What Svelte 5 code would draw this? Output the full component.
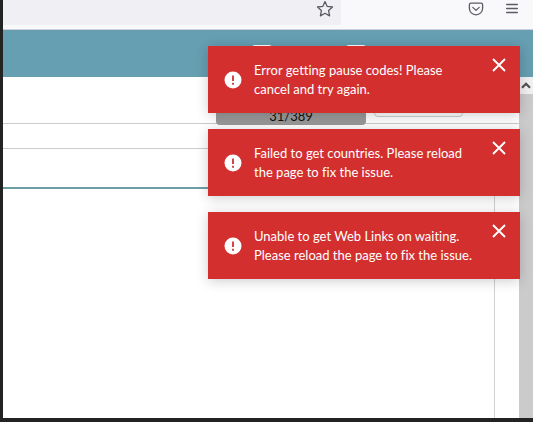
<script>
  let toasts = $state([
    { id: 1, text: 'Error getting pause codes! Please cancel and try again.' },
    { id: 2, text: 'Failed to get countries. Please reload the page to fix the issue.' },
    { id: 3, text: 'Unable to get Web Links on waiting. Please reload the page to fix the issue.' }
  ]);

  function dismiss(id) {
    toasts = toasts.filter((toast) => toast.id !== id);
  }
</script>

<div class="window">
  <div class="browser-bar">
    <div class="address">
      <button class="icon-button" aria-label="Bookmark this page">
        <svg width="18" height="18" viewBox="0 0 18 18" fill="none" stroke="#5b5b66" stroke-width="1.3" stroke-linejoin="round">
          <path d="M9 1.6 11.2 6.4 16.5 7 12.6 10.6 13.6 15.9 9 13.3 4.4 15.9 5.4 10.6 1.5 7 6.8 6.4Z" />
        </svg>
      </button>
    </div>
    <div class="tools">
      <button class="icon-button" aria-label="Save to Pocket">
        <svg width="16" height="16" viewBox="0 0 16 16" fill="none" stroke="#5b5b66" stroke-width="1.3" stroke-linecap="round" stroke-linejoin="round">
          <path d="M3 2.2h10a1.6 1.6 0 0 1 1.6 1.6V7.2a6.6 6.6 0 0 1-13.2 0V3.8A1.6 1.6 0 0 1 3 2.2Z" />
          <path d="M4.8 6.4 8 9.4l3.2-3" />
        </svg>
      </button>
      <button class="icon-button" aria-label="Open application menu">
        <svg width="12" height="12" viewBox="0 0 12 12" stroke="#5b5b66" stroke-width="1.3" stroke-linecap="round">
          <path d="M.6 1.5h10.8M.6 5.5h10.8M.6 9.5h10.8" />
        </svg>
      </button>
    </div>
  </div>

  <div class="viewport">
    <header class="app-header">
      <span class="chip"></span>
      <span class="chip"></span>
    </header>

    <div class="page">
      <main>
        <div class="controls">
          <div class="counter">31/389</div>
          <input class="field" type="text" aria-label="Search" />
        </div>
        <section class="panel">
          <div class="panel-head"></div>
        </section>
      </main>
      <div class="scrollbar">
        <button class="scroll-up" aria-label="Scroll up">
          <svg width="10" height="7" viewBox="0 0 10 7" fill="none" stroke="#505050" stroke-width="2.2">
            <path d="M1 5.7 5 1.7 9 5.7" />
          </svg>
        </button>
      </div>
    </div>

    <div class="toasts">
      {#each toasts as toast (toast.id)}
        <div class="toast" role="alert">
          <svg class="alert-icon" width="18" height="18" viewBox="0 0 18 18">
            <circle cx="9" cy="9" r="8.5" fill="#fff" />
            <path d="M9 4.5v5.5M9 11.7v2" stroke="#d32f2f" stroke-width="1.8" />
          </svg>
          <p>{toast.text}</p>
          <button class="close" aria-label="Close" onclick={() => dismiss(toast.id)}>
            <svg width="14" height="14" viewBox="0 0 14 14" stroke="#fff" stroke-width="1.9">
              <path d="M1 1 13 13M13 1 1 13" />
            </svg>
          </button>
        </div>
      {/each}
    </div>
  </div>
</div>

<style>
  :global(body) {
    margin: 0;
  }

  .window {
    box-sizing: border-box;
    min-height: 100vh;
    display: flex;
    flex-direction: column;
    border-left: 3px solid #232323;
    border-bottom: 4px solid #232323;
    background: #fff;
    font-family: Lato, 'Liberation Sans', sans-serif;
    font-variant-ligatures: none;
  }

  button {
    display: flex;
    padding: 0;
    border: 0;
    background: none;
    cursor: pointer;
  }

  .browser-bar {
    box-sizing: border-box;
    height: 30px;
    display: flex;
    background: #f9f9fb;
    border-bottom: 1px solid #cfcfdc;
  }

  .address {
    box-sizing: border-box;
    height: 25px;
    flex: 1;
    display: flex;
    justify-content: flex-end;
    padding-right: 7px;
    background: #f0f0f4;
  }

  .address .icon-button {
    align-self: flex-start;
  }

  .tools {
    box-sizing: border-box;
    width: 192px;
    height: 18px;
    display: flex;
    align-items: center;
    justify-content: flex-end;
    gap: 22px;
    padding-right: 15px;
  }

  .viewport {
    position: relative;
    flex: 1;
    display: flex;
    flex-direction: column;
  }

  .app-header {
    height: 47px;
    display: flex;
    align-items: center;
    justify-content: flex-end;
    gap: 74px;
    padding-right: 167px;
    background: #669eb2;
  }

  .chip {
    width: 20px;
    height: 18px;
    border-radius: 3px;
    background: #fff;
  }

  .page {
    flex: 1;
    display: flex;
  }

  main {
    flex: 1;
    display: flex;
    flex-direction: column;
  }

  .controls {
    box-sizing: border-box;
    height: 47px;
    display: flex;
    justify-content: flex-end;
    gap: 8px;
    padding: 8px 56px 0 0;
    border-bottom: 1px solid #c9cccd;
  }

  .counter {
    box-sizing: border-box;
    width: 150px;
    height: 40px;
    padding-top: 21px;
    border-radius: 4px;
    background: #999;
    color: #111;
    font-size: 13px;
    line-height: 20px;
    text-align: center;
  }

  .field {
    box-sizing: border-box;
    width: 89px;
    height: 32px;
    border: 1px solid #c9cccd;
    border-radius: 4px;
    background: #fff;
  }

  .panel {
    flex: 1;
    margin: 24px 24px 0 0;
    border-top: 1px solid #c9cccd;
    border-right: 1px solid #d2d2d2;
  }

  .panel-head {
    height: 38px;
    border-bottom: 2px solid #6b9fa4;
  }

  .scrollbar {
    width: 14px;
    background: #cbcbcb;
  }

  .scroll-up {
    width: 100%;
    height: 17px;
    align-items: center;
    justify-content: center;
    background: #f1f1f1;
  }

  .toasts {
    position: absolute;
    top: 16px;
    right: 13px;
    width: 312px;
    display: flex;
    flex-direction: column;
    gap: 16px;
  }

  .toast {
    box-sizing: border-box;
    min-height: 67px;
    display: flex;
    align-items: center;
    padding: 0 14px 0 16px;
    background: #d32f2f;
    color: #fff;
    box-shadow: 0 2px 12px rgba(0, 0, 0, 0.2);
  }

  .alert-icon {
    flex: none;
  }

  .toast p {
    flex: 1;
    margin: 0 14px 0 12px;
    font-size: 13px;
    line-height: 19px;
  }

  .close {
    align-self: flex-start;
    margin-top: 12px;
  }
</style>
